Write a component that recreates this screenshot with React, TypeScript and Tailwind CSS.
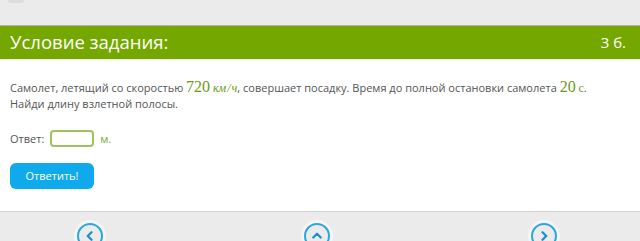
export default function App() {
  const navIcon = (d: string) => (
    <div className="w-[26px] h-[26px] rounded-full border-2 border-[#29a8e0] flex items-center justify-center shadow-[0_0_0_3px_rgba(255,255,255,0.5)]">
      <svg viewBox="0 0 16 16" className="w-[12px] h-[12px]" fill="none" stroke="#1a8fd0" strokeWidth={3} strokeLinecap="round" strokeLinejoin="round">
        <path d={d} />
      </svg>
    </div>
  );

  return (
    <div className="w-[640px] h-[241px] overflow-hidden bg-white font-['Open_Sans',sans-serif] text-[#555555]">
      {/* top strip */}
      <div className="h-[26px] bg-[#ebebeb] border-b border-[#b4b4b4] relative">
        <div className="absolute left-[8px] top-0 w-[16px] h-[3px] rounded-b bg-[#dcdcdc]" />
      </div>

      {/* header */}
      <div className="h-[34px] bg-[#74a700] border-b border-[#e9f1d8] flex items-center justify-between px-[10px] text-white">
        <span className="text-[18.5px] leading-none">Условие задания:</span>
        <span className="text-[15px] leading-none pr-[4px]">3 б.</span>
      </div>

      {/* body */}
      <div className="h-[151px] px-[10px] pt-[19px] text-[11px] leading-[16px]">
        <p>
          Самолет, летящий со скоростью{' '}
          <span className="font-['Liberation_Serif',serif] text-[16px] text-[#6a9b17]">720</span>{' '}
          <span className="font-['Liberation_Serif',serif] italic text-[12px] text-[#6a9b17]">
            км<span className="mx-[1px]">/</span>ч
          </span>
          , совершает посадку. Время до полной остановки самолета{' '}
          <span className="font-['Liberation_Serif',serif] text-[16px] text-[#6a9b17]">20</span>{' '}
          <span className="font-['Liberation_Serif',serif] text-[12px] text-[#6a9b17]">с</span>.
          <br />
          Найди длину взлетной полосы.
        </p>

        <div className="flex items-center mt-[18px] h-[17px]">
          <span>Ответ:</span>
          <div className="ml-[6px] w-[44px] h-[17px] rounded-[4px] border-2 border-[#9cc25a] bg-white" />
          <span className="ml-[6px] text-[#7aa832]">м.</span>
        </div>

        <button className="mt-[16px] w-[84px] h-[26px] rounded-[6px] bg-[#0eaaeb] text-white text-[11px]">
          Ответить!
        </button>
      </div>

      {/* footer nav */}
      <div className="h-[30px] bg-[#ebebeb] border-t border-[#d2d2d2] pt-[11px] flex">
        <div className="w-[180px] flex justify-center">{navIcon('M10 3 L5 8 L10 13')}</div>
        <div className="w-[274px] flex justify-center">{navIcon('M3 10 L8 5 L13 10')}</div>
        <div className="w-[180px] flex justify-center">{navIcon('M6 3 L11 8 L6 13')}</div>
      </div>
    </div>
  );
}
